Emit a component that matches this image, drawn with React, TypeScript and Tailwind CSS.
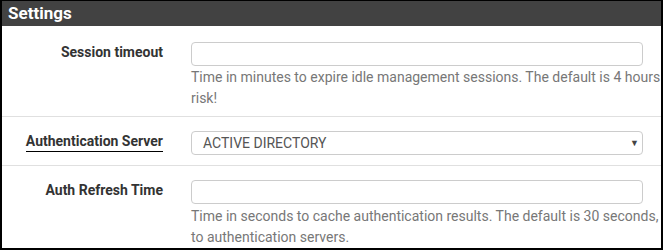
import React from "react";

export default function App() {
  const font = { fontFamily: "Roboto, 'Noto Sans', sans-serif" };
  return (
    <div
      className="w-[663px] h-[250px] overflow-hidden bg-white border-l-[2px] border-r-[2px] border-b-[2px] border-t-[1px] border-black box-border flex flex-col"
      style={font}
    >
      <div className="h-[25px] shrink-0 bg-[#424242] text-white font-bold text-[17px] leading-[25px] pl-[6px]">
        Settings
      </div>
      {/* Row 1 */}
      <div className="flex h-[91px] shrink-0 border-b border-[#e0e0e0]">
        <div className="w-[174px] shrink-0 pr-[13px] pt-[16px] text-right text-[14px] leading-[20px] font-bold text-[#333] whitespace-nowrap">
          Session timeout
        </div>
        <div className="flex-1 min-w-0 pt-[16px] pl-[15px] overflow-hidden">
          <div className="w-[452px] h-[24px] border border-[#ccc] rounded-[4px] bg-white" />
          <div className="mt-[1px] text-[14px] leading-[21px] text-[#777] whitespace-nowrap">
            Time in minutes to expire idle management sessions. The default is 4 hours
          </div>
          <div className="text-[14px] leading-[21px] text-[#777] whitespace-nowrap">risk!</div>
        </div>
      </div>
      {/* Row 2 */}
      <div className="flex h-[49px] shrink-0 border-b border-[#e0e0e0]">
        <div className="w-[174px] shrink-0 pr-[13px] pt-[14px] text-right text-[14px] leading-[20px] font-bold text-[#333] whitespace-nowrap">
          <span className="border-b-[1.5px] border-black pb-[2px]">Authentication Server</span>
        </div>
        <div className="flex-1 min-w-0 pt-[14px] pl-[15px]">
          <div className="w-[452px] h-[24px] border border-[#ccc] rounded-[4px] bg-white flex items-center justify-between pl-[11px] pr-[3px]">
            <span className="text-[14px] text-[#555]">ACTIVE DIRECTORY</span>
            <span className="text-[9px] text-[#444] leading-none">▼</span>
          </div>
        </div>
      </div>
      {/* Row 3 */}
      <div className="flex flex-1 min-h-0">
        <div className="w-[174px] shrink-0 pr-[13px] pt-[14px] text-right text-[14px] leading-[20px] font-bold text-[#333] whitespace-nowrap">
          Auth Refresh Time
        </div>
        <div className="flex-1 min-w-0 pt-[14px] pl-[15px] overflow-hidden">
          <div className="w-[452px] h-[24px] border border-[#ccc] rounded-[4px] bg-white" />
          <div className="mt-[2px] text-[14px] leading-[21px] text-[#777] whitespace-nowrap">
            Time in seconds to cache authentication results. The default is 30 seconds,
          </div>
          <div className="text-[14px] leading-[21px] text-[#777] whitespace-nowrap">to authentication servers.</div>
        </div>
      </div>
    </div>
  );
}
